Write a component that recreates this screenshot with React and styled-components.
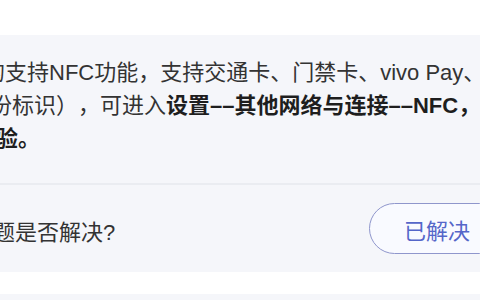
import React from 'react';
import styled, { createGlobalStyle } from 'styled-components';

const GlobalStyle = createGlobalStyle`
  html, body {
    margin: 0;
    padding: 0;
    background: #ffffff;
  }
  body {
    width: 480px;
    height: 300px;
    overflow: hidden;
    font-family: "Liberation Sans", "Noto Sans CJK SC", sans-serif;
    -webkit-font-smoothing: antialiased;
    text-spacing-trim: space-all;
  }
`;

const Page = styled.div`
  width: 480px;
  height: 300px;
  overflow: hidden;
  background: #ffffff;
  display: flex;
  flex-direction: column;
`;

const TopGap = styled.div`
  height: 35px;
  flex-shrink: 0;
`;

const Card = styled.section`
  background: #f5f6fa;
  flex-shrink: 0;
  overflow: hidden;
`;

const Answer = styled.div`
  padding: 21px 0 28px;
  margin-left: -17px;
  font-size: 22px;
  line-height: 33px;
  color: #333333;
  white-space: nowrap;
`;

const Line = styled.div`
  margin-left: ${(p) => p.$shift || 0}px;
`;

const Strong = styled.b`
  font-weight: 700;
  color: #1e1e1e;
`;

const Divider = styled.div`
  height: 2px;
  background: #eaecf1;
`;

const Feedback = styled.div`
  height: 87px;
  display: flex;
  align-items: center;
  justify-content: space-between;
  overflow: hidden;
`;

const Question = styled.span`
  margin-left: -7px;
  margin-top: 3px;
  font-size: 22px;
  color: #333333;
`;

const SolvedButton = styled.button`
  flex-shrink: 0;
  width: 136px;
  height: 51px;
  margin-right: -25px;
  border: 1.5px solid #8f96cc;
  border-radius: 26px;
  background: #f9faff;
  color: #5566c9;
  font-family: "Noto Sans CJK SC", sans-serif;
  font-size: 22px;
  padding: 0;
  cursor: pointer;
`;

const BottomGap = styled.div`
  height: 22px;
  flex-shrink: 0;
`;

const NextCard = styled.div`
  flex: 1;
  background: #f5f6fa;
`;

export default function App() {
  return (
    <>
      <GlobalStyle />
      <Page>
        <TopGap />
        <Card>
          <Answer>
            <Line>的支持NFC功能，支持交通卡、门禁卡、vivo Pay、</Line>
            <Line $shift={7}>
              份标识），可进入<Strong>设置––其他网络与连接––NFC，</Strong>
            </Line>
            <Line $shift={13}>
              <Strong>验。</Strong>
            </Line>
          </Answer>
          <Divider />
          <Feedback>
            <Question>题是否解决?</Question>
            <SolvedButton>已解决</SolvedButton>
          </Feedback>
        </Card>
        <BottomGap />
        <NextCard />
      </Page>
    </>
  );
}
